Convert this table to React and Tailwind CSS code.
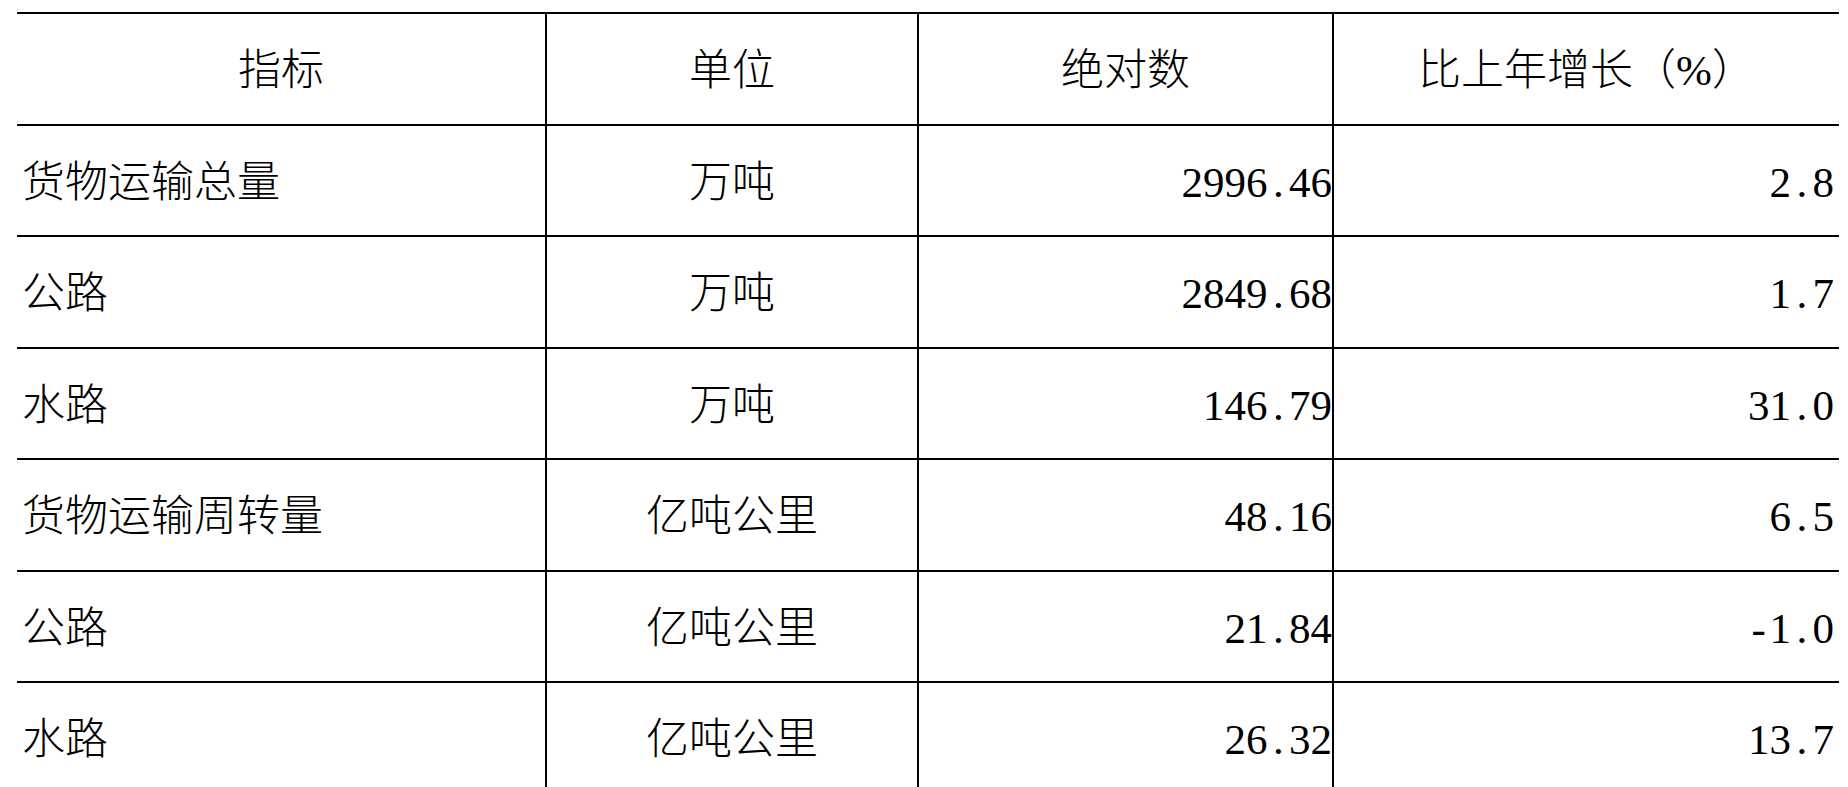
import React from "react";

const rows = [
  { name: "货物运输总量", unit: "万吨", value: "2996.46", rate: "2.8" },
  { name: "公路", unit: "万吨", value: "2849.68", rate: "1.7" },
  { name: "水路", unit: "万吨", value: "146.79", rate: "31.0" },
  { name: "货物运输周转量", unit: "亿吨公里", value: "48.16", rate: "6.5" },
  { name: "公路", unit: "亿吨公里", value: "21.84", rate: "-1.0" },
  { name: "水路", unit: "亿吨公里", value: "26.32", rate: "13.7" },
];

// SimSun-style half-width punctuation: dot and minus take a full digit cell
function Num({ text }) {
  return (
    <span>
      {text.split("").map((ch, i) =>
        ch === "." || ch === "-" ? (
          <span key={i} className="inline-block w-[0.5em] text-center">
            {ch}
          </span>
        ) : (
          <span key={i}>{ch}</span>
        )
      )}
    </span>
  );
}

const grid = "grid grid-cols-[528px_372px_415px_507px] h-[111.5px] border-t-2 border-black";
const cell = "flex items-center h-full pt-[4px]";

export default function App() {
  return (
    <div className="min-h-screen bg-white pt-3 pl-[17px] text-black text-[43px] leading-none font-light font-['Liberation_Serif','Noto_Sans_CJK_SC',serif]">
      <div className="w-[1822px]">
        {/* Header */}
        <div className={grid}>
          <div className={`${cell} justify-center`}>指标</div>
          <div className={`${cell} justify-center border-l-2 border-black`}>单位</div>
          <div className={`${cell} justify-center border-l-2 border-black`}>绝对数</div>
          <div className={`${cell} justify-center border-l-2 border-black`}>比上年增长（%）</div>
        </div>

        {/* Body */}
        {rows.map((r, i) => (
          <div key={i} className={grid}>
            <div className={`${cell} pl-[5px]`}>{r.name}</div>
            <div className={`${cell} justify-center border-l-2 border-black`}>{r.unit}</div>
            <div className={`${cell} justify-end border-l-2 border-black`}>
              <Num text={r.value} />
            </div>
            <div className={`${cell} justify-end pr-[5px] border-l-2 border-black`}>
              <Num text={r.rate} />
            </div>
          </div>
        ))}
      </div>
    </div>
  );
}
